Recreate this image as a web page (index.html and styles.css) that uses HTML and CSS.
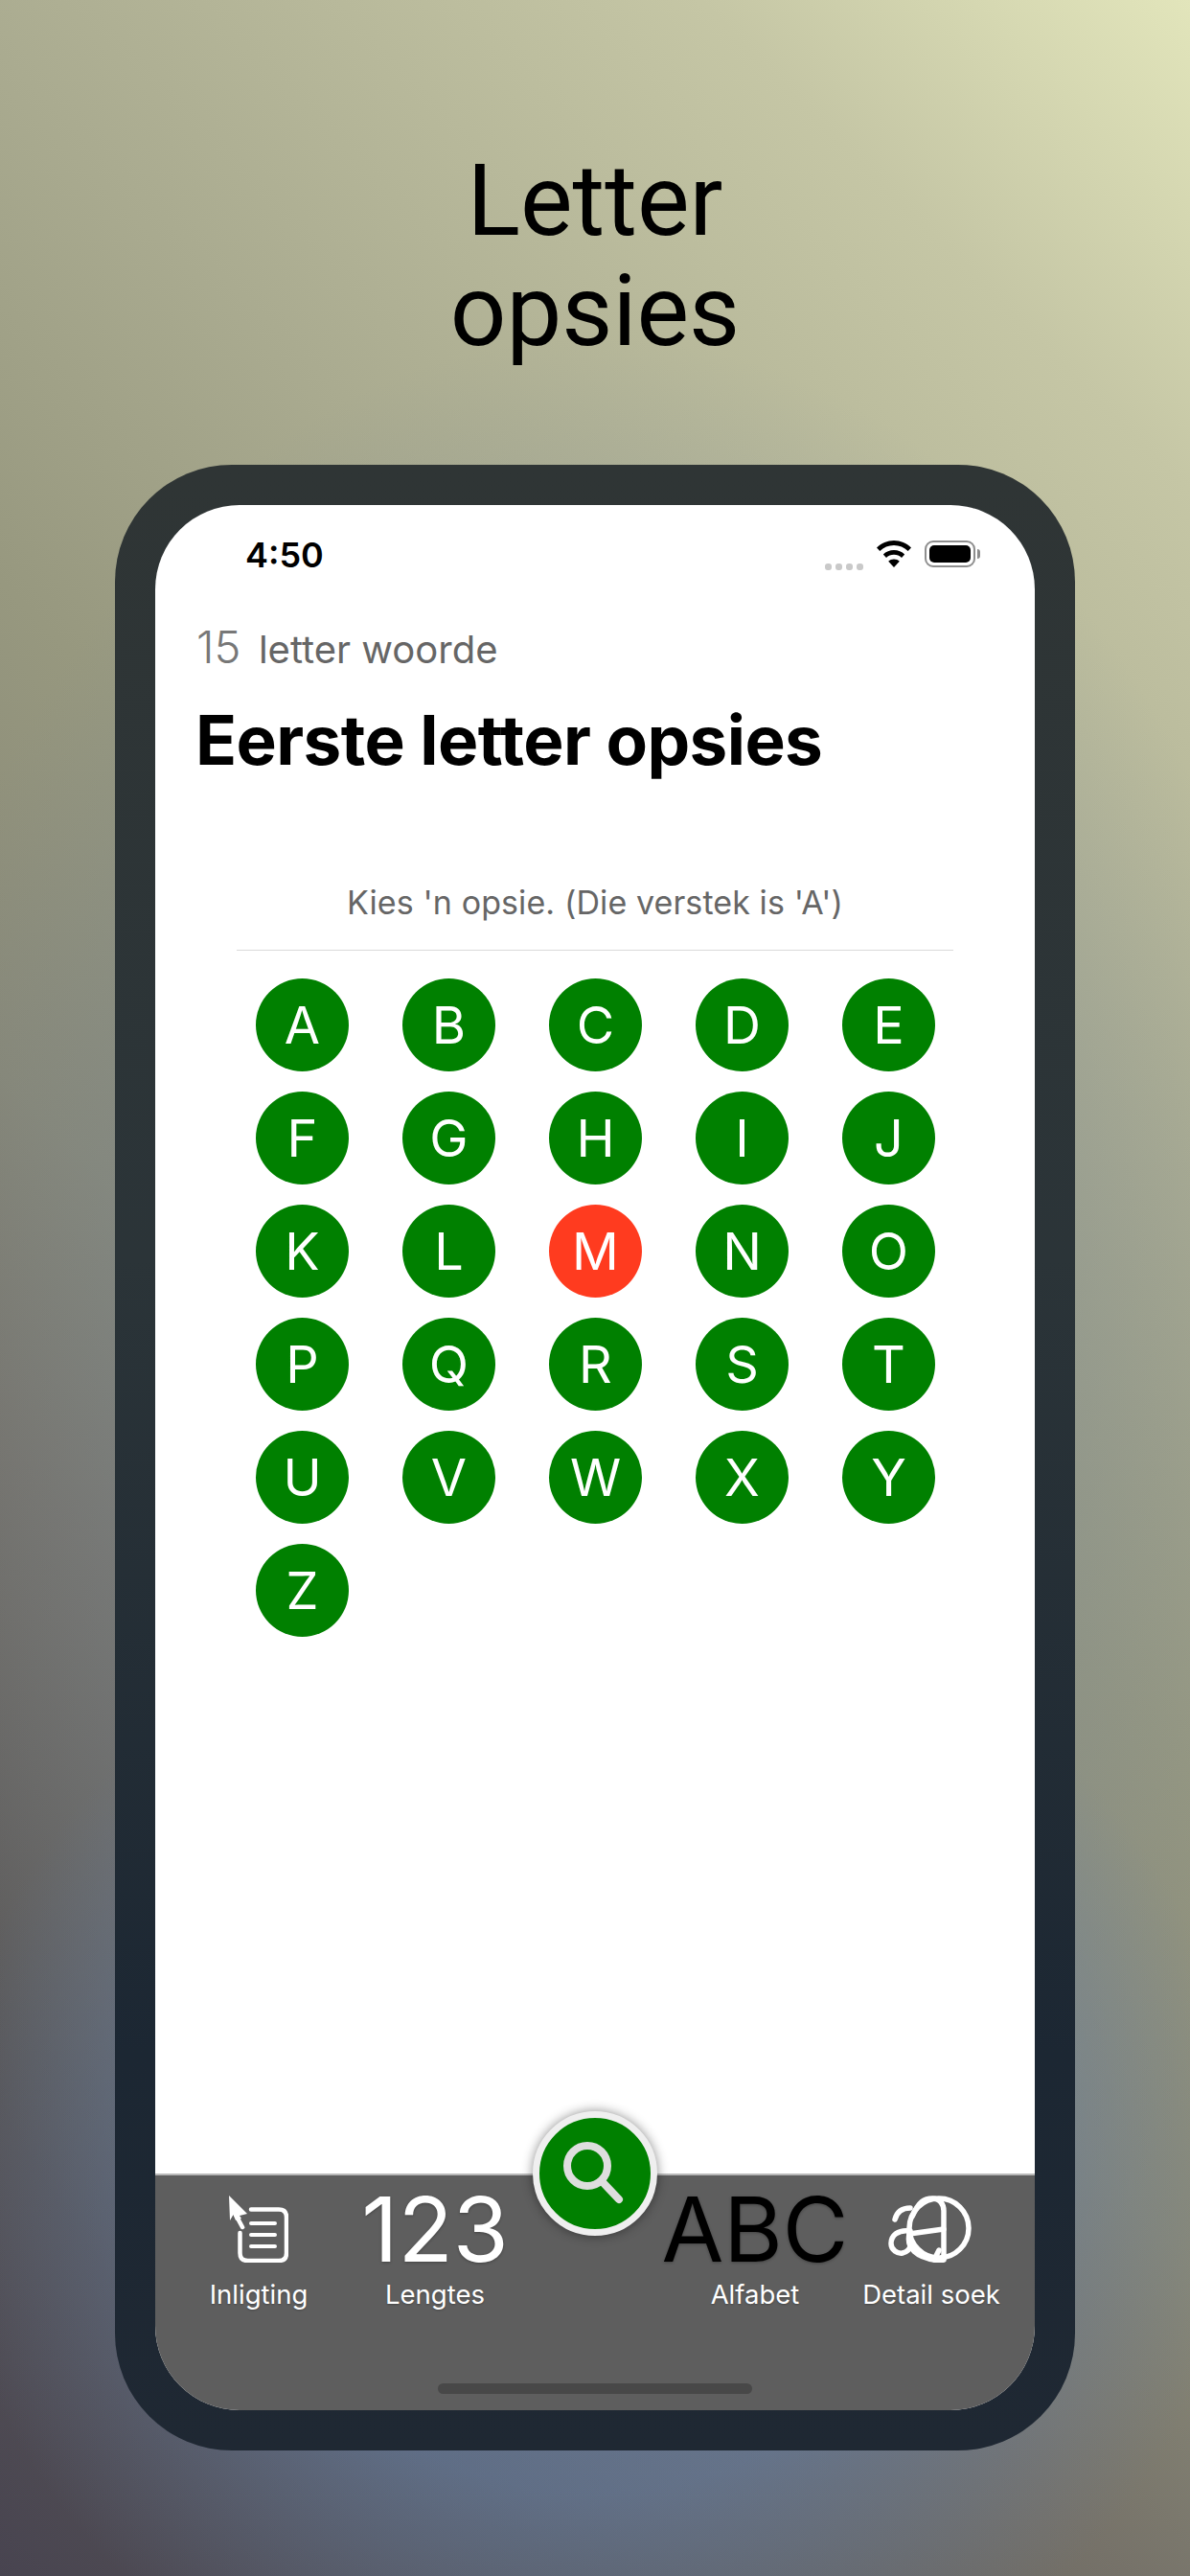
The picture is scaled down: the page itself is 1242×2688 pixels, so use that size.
FILE: index.html
```html
<!DOCTYPE html>
<html lang="af">
<head>
<meta charset="utf-8">
<title>Letter opsies</title>
<link rel="stylesheet" href="styles.css">
</head>
<body>
<div class="poster">
  <h1 class="headline">Letter<br>opsies</h1>
  <div class="phone">
    <div class="screen">
      <div class="status">
        <span class="time">4:50</span>
        <div class="status-icons">
          <span class="dots"><i></i><i></i><i></i><i></i></span>
          <svg class="wifi" viewBox="0 0 36 28"><path d="M18 0C11 0 5 2.800 0 7.500L3.300 11C7.300 7.300 12.300 5 18 5s10.700 2.300 14.700 6L36 7.500C31 2.800 25 0 18 0z"/><path d="M18 10c-4.400 0-8.300 1.700-11.200 4.500L10 18c2.100-2 4.900-3.200 8-3.200s5.900 1.200 8 3.200l3.200-3.500C26.300 11.700 22.400 10 18 10z"/><path d="M18 19.500c-2.300 0-4.300.9-5.800 2.300L18 28l5.800-6.200c-1.500-1.400-3.500-2.300-5.800-2.300z"/></svg>
          <span class="battery"><span class="battery-fill"></span></span>
          <span class="battery-nub"></span>
        </div>
      </div>
      <main class="content">
        <p class="count"><span class="count-num">15</span> <span class="count-label">letter woorde</span></p>
        <h2 class="page-title">Eerste letter opsies</h2>
        <p class="hint">Kies 'n opsie. (Die verstek is 'A')</p>
        <div class="letters">
          <span class="letter">A</span><span class="letter">B</span><span class="letter">C</span><span class="letter">D</span><span class="letter">E</span>
          <span class="letter">F</span><span class="letter">G</span><span class="letter">H</span><span class="letter">I</span><span class="letter">J</span>
          <span class="letter">K</span><span class="letter">L</span><span class="letter letter-on">M</span><span class="letter">N</span><span class="letter">O</span>
          <span class="letter">P</span><span class="letter">Q</span><span class="letter">R</span><span class="letter">S</span><span class="letter">T</span>
          <span class="letter">U</span><span class="letter">V</span><span class="letter">W</span><span class="letter">X</span><span class="letter">Y</span>
          <span class="letter">Z</span>
        </div>
      </main>
      <nav class="tabs">
        <div class="tab">
          <svg class="tab-icon icon-info" viewBox="0 0 62 70">
            <path class="arrow-head" d="M0 0L19 19L11 21L13 24L7 26L4.500 20L1 26z"/>
            <path class="info-line" d="M7 20L14 33"/>
            <path class="info-line" d="M23 14.500H52Q60 14.500 60 22.500V60Q60 68 52 68H19.500Q11.500 68 11.500 60V39"/>
            <path class="info-line thin" d="M23 29H48M23 41H48M23 53H48"/>
          </svg>
          <span class="tab-label">Inligting</span>
        </div>
        <div class="tab">
          <span class="tab-glyph glyph-white">123</span>
          <span class="tab-label">Lengtes</span>
        </div>
        <div class="tab-gap"></div>
        <div class="tab">
          <span class="tab-glyph glyph-black">ABC</span>
          <span class="tab-label">Alfabet</span>
        </div>
        <div class="tab">
          <svg class="tab-icon icon-detail" viewBox="0 0 90 70">
            <circle cx="53" cy="34" r="31"/>
            <path d="M7 25C9 17 15 13 23 13"/>
            <path d="M23 37C10 35 3 42 3 50C3 57 10 61 15 60C20 59 23 55 24 50"/>
            <path d="M25 22C32 6 38 3 46 3C54 3 58 9 58 16V67"/>
            <path d="M22 40L58 35"/>
            <path d="M22 40C19 54 28 66 56 68"/>
            <path d="M48 67L53 57"/>
          </svg>
          <span class="tab-label">Detail soek</span>
        </div>
      </nav>
      <div class="home-bar"></div>
      <div class="fab">
        <svg class="fab-icon" viewBox="0 0 70 70"><circle cx="27" cy="27" r="21"/><path d="M42 43L60 62"/></svg>
      </div>
    </div>
  </div>
</div>
</body>
</html>
```
FILE: styles.css
```css
* { box-sizing: border-box; }
html, body { margin: 0; padding: 0; }
body { width: 1242px; height: 2688px; overflow: hidden; font-family: Inter, "Noto Sans", sans-serif; }

.poster {
  width: 1242px;
  height: 2688px;
  display: flex;
  flex-direction: column;
  align-items: center;
  background:
    radial-gradient(ellipse 680px 620px at 620px 2260px, rgba(98,122,160,.62) 0%, rgba(98,122,160,.62) 55%, rgba(98,122,160,0) 100%),
    radial-gradient(ellipse 780px 1150px at 621px 1500px, rgba(120,135,150,.3) 0%, rgba(120,135,150,.3) 65%, rgba(120,135,150,0) 100%),
    linear-gradient(225deg, #e2e5bb 0%, #c5c6a5 13%, #aaab90 33%, #97987f 47%, #888877 60%, #767269 70%, #5a5858 85%, #484450 100%);
}

.headline {
  margin: 0;
  padding-top: 152px;
  height: 485px;
  font-family: Roboto, sans-serif;
  font-weight: 400;
  font-size: 103px;
  line-height: 115px;
  text-align: center;
  color: #000;
}

.phone {
  width: 1002px;
  height: 2072px;
  padding: 42px;
  border-radius: 122px;
  background: linear-gradient(180deg, #2f3535 0%, #2b3438 40%, #1c2733 80%, #1f2833 100%);
}

.screen {
  position: relative;
  width: 918px;
  height: 1988px;
  border-radius: 88px;
  background: #fff;
  display: flex;
  flex-direction: column;
  overflow: hidden;
}

.status {
  height: 105px;
  flex: none;
  display: flex;
  justify-content: space-between;
  padding: 30px 57px 0 94px;
}
.time { font-size: 36px; font-weight: 600; line-height: 44px; color: #000; }
.status-icons { display: flex; align-items: flex-start; padding-top: 7px; }
.dots { display: flex; gap: 4px; margin-top: 24px; margin-right: 14px; }
.dots i { width: 7px; height: 7px; border-radius: 3px; background: #c9c9c9; }
.wifi { width: 36px; height: 28px; fill: #000; margin-right: 14px; }
.battery { width: 53px; height: 28px; border: 2px solid #8e8e8e; border-radius: 9px; padding: 3px; display: flex; }
.battery-fill { flex: 1; background: #000; border-radius: 5px; }
.battery-nub { width: 3px; height: 10px; margin: 9px 0 0 2px; background: #8e8e8e; border-radius: 0 3px 3px 0; }

.content { flex: 1; padding: 0 43px; display: flex; flex-direction: column; min-height: 0; }
.count { margin: 17px 0 0; height: 52px; line-height: 52px; color: #666; white-space: nowrap; }
.count-num { font-size: 47px; font-weight: 300; margin-right: 14px; color: #777; }
.count-label { font-size: 40px; font-weight: 400; }
.page-title { margin: 29px 0 0 -1px; font-size: 71px; line-height: 84px; font-weight: 700; color: #000; letter-spacing: -.6px; }
.hint {
  margin: 109px 42px 0;
  height: 69px;
  border-bottom: 1px solid #d9d9d9;
  text-align: center;
  font-size: 34px;
  line-height: 38px;
  letter-spacing: .1px;
  color: #666;
}
.letters {
  margin: 29px 43px 0;
  padding: 0 19px;
  display: grid;
  grid-template-columns: repeat(5, 97px);
  column-gap: 56px;
  row-gap: 21px;
}
.letter {
  width: 97px;
  height: 97px;
  border-radius: 50%;
  background: #008000;
  color: #fff;
  font-size: 54px;
  font-weight: 400;
  line-height: 97px;
  text-align: center;
}
.letter-on { background: #ff3b1f; }

.tabs {
  flex: none;
  height: 247px;
  background: #5e5e5e;
  border-top: 2px solid #b9b9b9;
  padding: 21px 16px 0;
  display: grid;
  grid-template-columns: 184px 184px 150px 184px 184px;
  align-items: start;
}
.tab { display: flex; flex-direction: column; align-items: center; }
.tab-icon { display: block; height: 70px; fill: none; stroke: #fff; stroke-linecap: round; stroke-linejoin: round; }
.icon-info { width: 62px; stroke-width: 4.500; }
.icon-info .arrow-head { fill: #fff; stroke: none; }
.icon-info .thin { stroke-width: 4; }
.icon-detail { width: 90px; stroke-width: 5.500; }
.tab-glyph { height: 70px; font-size: 94px; line-height: 70px; font-weight: 400; white-space: nowrap; text-shadow: 0 1px 3px rgba(0,0,0,.3); }
.glyph-white { color: #fff; }
.glyph-black { color: #000; }
.tab-label { margin-top: 16px; font-size: 27.500px; line-height: 34px; color: #fff; white-space: nowrap; text-shadow: 0 1px 2px rgba(0,0,0,.25); }

.home-bar {
  position: absolute;
  left: 295px;
  bottom: 17px;
  width: 328px;
  height: 11px;
  border-radius: 6px;
  background: #484848;
}
.fab {
  position: absolute;
  left: 394px;
  top: 1676px;
  width: 130px;
  height: 130px;
  border-radius: 50%;
  background: #008000;
  border: 7px solid #efefef;
  box-shadow: 0 0 12px rgba(0,0,0,.45);
  display: flex;
  align-items: center;
  justify-content: center;
}
.fab-icon { width: 70px; height: 70px; fill: none; stroke: #dedede; stroke-width: 8; stroke-linecap: round; }
```
